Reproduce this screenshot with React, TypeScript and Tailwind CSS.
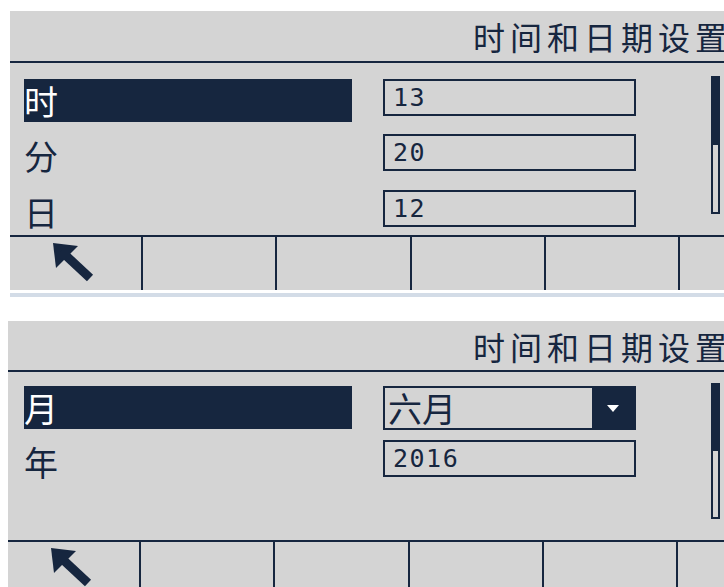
import React from "react";

const NAVY = "bg-[#16263f]";

function BackArrow() {
  return (
    <svg width="42" height="40" viewBox="0 0 42 40" className="block">
      <polygon points="0,0 25,3 3,25" fill="#16263f" />
      <line x1="8" y1="8" x2="37" y2="35" stroke="#16263f" strokeWidth="9" />
    </svg>
  );
}

function Footer({ h }: { h: string }) {
  const widths = ["w-[131px]", "w-[134px]", "w-[135px]", "w-[134px]", "w-[134px]", "w-[60px]"];
  return (
    <div className={`flex ${h}`}>
      {widths.map((w, i) => (
        <div
          key={i}
          className={`${w} shrink-0 h-full ${i > 0 ? "border-l-2 border-[#16263f]" : ""}`}
        >
          {i === 0 && (
            <div className="pl-[43px] pt-[6px]">
              <BackArrow />
            </div>
          )}
        </div>
      ))}
    </div>
  );
}

function Header({ h }: { h: string }) {
  return (
    <>
      <div className={`${h} flex items-center justify-end overflow-hidden`}>
        <span className="text-[32px] leading-none tracking-[5px] text-[#16263f] whitespace-nowrap mr-[-8px]">
          时间和日期设置
        </span>
      </div>
      <div className={`h-[2px] ${NAVY}`} />
    </>
  );
}

function Label({ text, selected }: { text: string; selected?: boolean }) {
  return (
    <div
      className={`w-[328px] h-[43px] flex items-center text-[34px] leading-none ${
        selected ? "bg-[#16263f] text-white" : "text-[#16263f]"
      }`}
    >
      <span>{text}</span>
    </div>
  );
}

function NumBox({ value }: { value: string }) {
  return (
    <div className="w-[253px] h-[37px] border-2 border-[#16263f] flex items-center pl-[8px]">
      <span className="font-['DejaVu_Sans_Mono',monospace] text-[25px] leading-none tracking-[1.5px] text-[#16263f]">
        {value}
      </span>
    </div>
  );
}

function Row({ label, selected, h, children }: { label: string; selected?: boolean; h: string; children: React.ReactNode }) {
  return (
    <div className={`flex items-start ${h}`}>
      <Label text={label} selected={selected} />
      <div className="ml-[31px]">{children}</div>
    </div>
  );
}

function Scrollbar({ top, h }: { top: string; h: string }) {
  return (
    <div className={`ml-auto mr-[4px] ${top}`}>
      <div className={`w-[9px] ${h} border-2 border-[#16263f] flex flex-col`}>
        <div className={`h-[50%] ${NAVY}`} />
      </div>
    </div>
  );
}

export default function App() {
  return (
    <div className="w-[724px] h-[587px] bg-white overflow-hidden font-['Noto_Sans_CJK_SC',sans-serif]">
      {/* first screen */}
      <div className="pt-[11px] pl-[10px]">
        <div className="bg-[#d4d4d4] flex flex-col">
          <Header h="h-[50px]" />
          <div className="h-[172px] flex pl-[14px]">
            <div className="pt-[16px]">
              <Row label="时" selected h="h-[55px]">
                <NumBox value="13" />
              </Row>
              <Row label="分" h="h-[56px]">
                <NumBox value="20" />
              </Row>
              <Row label="日" h="h-[45px]">
                <NumBox value="12" />
              </Row>
            </div>
            <Scrollbar top="mt-[13px]" h="h-[138px]" />
          </div>
          <div className={`h-[2px] ${NAVY}`} />
          <Footer h="h-[53px]" />
        </div>
        <div className="mt-[3px] h-[4px] bg-[#d3dce7]" />
      </div>

      {/* second screen */}
      <div className="mt-[24px] pl-[8px]">
        <div className="bg-[#d4d4d4] flex flex-col">
          <Header h="h-[49px]" />
          <div className="h-[168px] flex pl-[16px]">
            <div className="pt-[14px]">
              <Row label="月" selected h="h-[54px]">
                <div className="w-[253px] h-[44px] border-2 border-[#16263f] flex">
                  <div className="flex-1 flex items-center pl-[3px]">
                    <span className="text-[34px] leading-none text-[#16263f]">六月</span>
                  </div>
                  <div className={`w-[42px] h-full ${NAVY} flex items-center justify-center`}>
                    <svg width="12" height="7" viewBox="0 0 12 7">
                      <polygon points="0,0 12,0 6,7" fill="#ffffff" />
                    </svg>
                  </div>
                </div>
              </Row>
              <Row label="年" h="h-[45px]">
                <NumBox value="2016" />
              </Row>
            </div>
            <Scrollbar top="mt-[11px]" h="h-[136px]" />
          </div>
          <div className={`h-[2px] ${NAVY}`} />
          <Footer h="h-[45px]" />
        </div>
      </div>
    </div>
  );
}
